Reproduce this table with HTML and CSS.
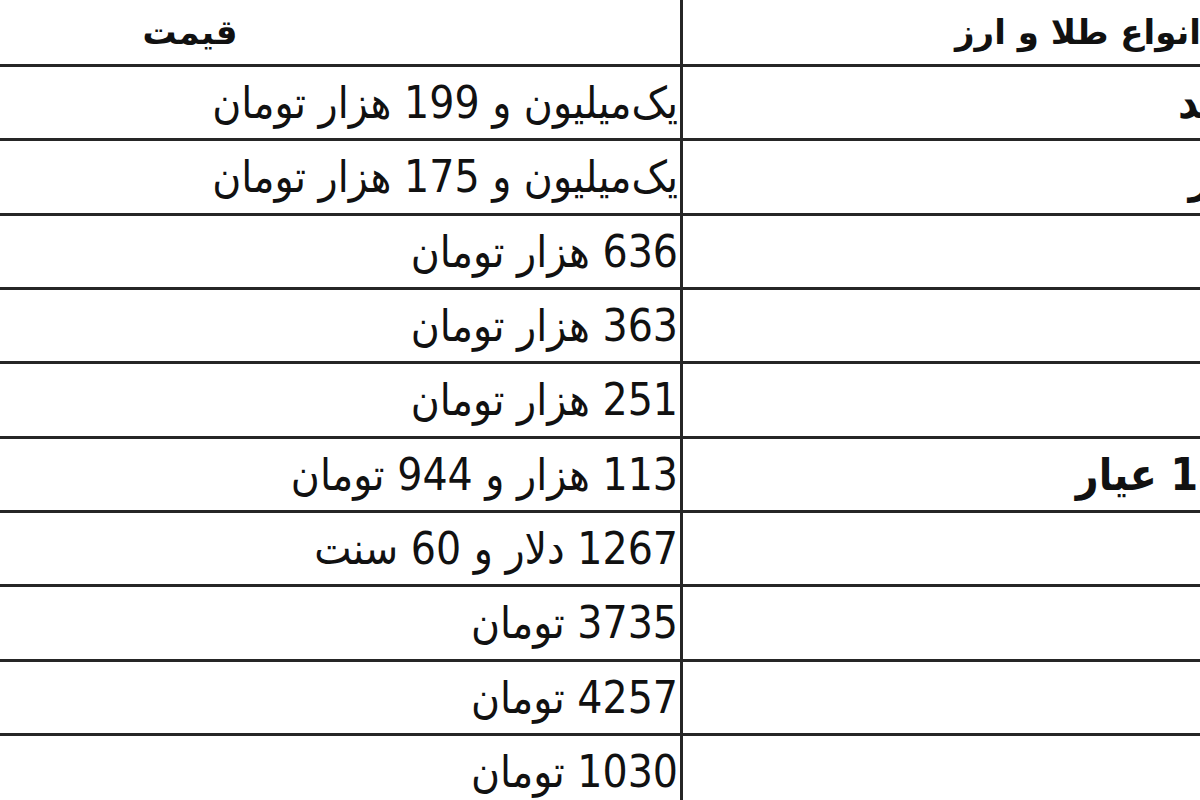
FILE: index.html
```html
<!DOCTYPE html>
<html lang="fa" dir="rtl">
<head>
<meta charset="utf-8">
<title>قیمت طلا و ارز</title>
<link rel="stylesheet" href="styles.css">
</head>
<body>
<table class="prices">
  <thead>
    <tr>
      <th class="name">انواع طلا و ارز</th>
      <th class="price">قیمت</th>
    </tr>
  </thead>
  <tbody>
    <tr><td class="name">نیم جدید</td><td class="price">یک‌میلیون و 199 هزار تومان</td></tr>
    <tr><td class="name">نیم بهار</td><td class="price">یک‌میلیون و 175 هزار تومان</td></tr>
    <tr><td class="name">نیم</td><td class="price">636 هزار تومان</td></tr>
    <tr><td class="name">ربع</td><td class="price">363 هزار تومان</td></tr>
    <tr><td class="name">گرمی</td><td class="price">251 هزار تومان</td></tr>
    <tr><td class="name">طلای 18 عیار</td><td class="price">113 هزار و 944 تومان</td></tr>
    <tr><td class="name">انس</td><td class="price">1267 دلار و 60 سنت</td></tr>
    <tr><td class="name">دلار</td><td class="price">3735 تومان</td></tr>
    <tr><td class="name">یورو</td><td class="price">4257 تومان</td></tr>
    <tr><td class="name">درهم</td><td class="price">1030 تومان</td></tr>
  </tbody>
</table>
</body>
</html>
```

FILE: styles.css
```css
html, body {
  margin: 0;
  padding: 0;
  background: #ffffff;
  overflow: hidden;
}

body {
  width: 1200px;
  height: 800px;
  direction: ltr;
}

.prices {
  direction: rtl;
  border-collapse: collapse;
  margin-left: -300px;
  width: 1770px;
  table-layout: fixed;
  font-family: "DejaVu Sans Condensed", "DejaVu Sans", sans-serif;
  color: #111111;
  font-size: 44px;
}

.prices th,
.prices td {
  border: 3px solid #262626;
  padding: 0;
  white-space: nowrap;
  overflow: hidden;
}

.prices tr > :first-child {
  border-right: none;
}

.prices tr > :last-child {
  border-left: none;
}

.prices thead th {
  border-top: none;
  height: 64px;
  font-family: "DejaVu Sans", sans-serif;
  font-size: 34px;
  font-weight: bold;
  text-align: center;
  vertical-align: middle;
}

.prices th.name {
  width: 790px;
}

.prices th.price {
  width: 980px;
}

.prices tbody td {
  height: 71.33px;
}

.prices td.name {
  text-align: right;
  padding-right: 130px;
  font-weight: bold;
}

.prices td.price {
  text-align: right;
  padding-right: 2px;
  font-weight: normal;
}
```
